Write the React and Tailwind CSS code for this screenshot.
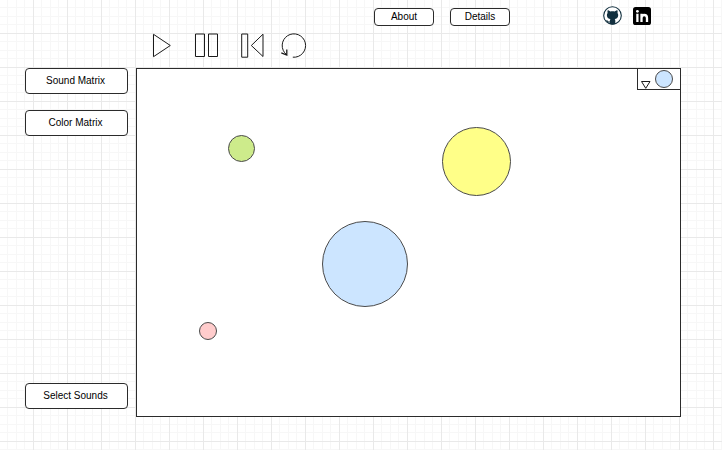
const shapes = [
  { name: "Green note", place: "left-[91px] top-[66px] size-[27px] bg-[#cdeb8b]" },
  { name: "Yellow note", place: "left-[305px] top-[58px] size-[69px] bg-[#ffff88]" },
  { name: "Blue note", place: "left-[185px] top-[152px] size-[86px] bg-[#cce5ff]" },
  { name: "Pink note", place: "left-[62px] top-[253px] size-[18px] bg-[#ffcccc]" },
];

function BoxButton({ size, children }) {
  return (
    <button
      type="button"
      className={`flex items-center justify-center rounded border border-[#2b2b2b] bg-white text-[10px] leading-3 text-black ${size}`}
    >
      {children}
    </button>
  );
}

function PlayerButton({ label, children }) {
  return (
    <button type="button" aria-label={label} className="h-[26px] w-7">
      <svg
        viewBox="0 0 28 26"
        fill="none"
        stroke="#1a1a1a"
        strokeWidth="1"
        className="block h-[26px] w-7 overflow-visible"
      >
        {children}
      </svg>
    </button>
  );
}

function GithubMark() {
  return (
    <svg viewBox="0 0 20 20" className="block size-5">
      <circle cx="9.5" cy="9.5" r="8.8" fill="#fff" stroke="#12303f" strokeWidth="1.1" />
      <path
        fill="#12303f"
        d="M4.700 4.300c.9 0 1.900.6 2.600 1.200 1.400-.4 3-.4 4.400 0 .8-.6 1.800-1.200 2.700-1.200.3.800.3 1.800.1 2.600.6.700.8 1.500.7 2.600-.2 2.200-1.500 3.200-3.500 3.500.4.500.6 1.100.6 1.800v3.100C10.600 18.700 8.700 18.700 6.800 17.900v-1.400c-1.700.3-2.400-.2-2.900-1.200-.3-.6-.5-.8-1-1.200.9-.2 1.500.2 2 .9.500.6 1.100.7 1.900.5 0-.9.200-1.600.6-2.500-2-.3-3.300-1.300-3.500-3.500-.1-1.100.1-1.900.7-2.600-.2-.8-.2-1.800.1-2.600z"
      />
    </svg>
  );
}

function LinkedinMark() {
  return (
    <svg viewBox="0 0 18 18" className="block size-[18px]">
      <rect width="18" height="18" rx="2.600" fill="#000" />
      <circle cx="4.400" cy="4.300" r="1.400" fill="#fff" />
      <path fill="none" stroke="#fff" strokeWidth="2.300" d="M4.400 6.800V15M8.500 15V6.800M8.500 11c0-4 5.500-4 5.500 0v4" />
    </svg>
  );
}

export default function App() {
  return (
    <div className="flex min-h-screen flex-col bg-white bg-[linear-gradient(to_right,#e9e9e9_1px,transparent_1px),linear-gradient(to_bottom,#e9e9e9_1px,transparent_1px),linear-gradient(to_right,transparent_8px,#f7f7f7_8px,#f7f7f7_9px,transparent_9px,transparent_17px,#f7f7f7_17px,#f7f7f7_18px,transparent_18px,transparent_25px,#f7f7f7_25px,#f7f7f7_26px,transparent_26px),linear-gradient(to_bottom,transparent_8px,#f7f7f7_8px,#f7f7f7_9px,transparent_9px,transparent_17px,#f7f7f7_17px,#f7f7f7_18px,transparent_18px,transparent_25px,#f7f7f7_25px,#f7f7f7_26px,transparent_26px)] bg-[size:34px_34px] bg-[position:33px_33px] pb-[33px] pt-1.5 font-['Liberation_Sans',Arial,sans-serif]">
      <header className="flex items-end justify-end pr-[71px]">
        <nav className="mr-[93px] flex gap-4">
          <BoxButton size="h-[18px] w-[60px]">About</BoxButton>
          <BoxButton size="h-[18px] w-[60px]">Details</BoxButton>
        </nav>
        <div className="flex items-center gap-[10px]">
          <a href="#github" aria-label="GitHub">
            <GithubMark />
          </a>
          <a href="#linkedin" aria-label="LinkedIn">
            <LinkedinMark />
          </a>
        </div>
      </header>

      <div className="mt-1.5 flex gap-4 pl-[148px]">
        <PlayerButton label="Play">
          <path d="M5.500 2.300V24.700L22.300 13.500z" />
        </PlayerButton>
        <PlayerButton label="Pause">
          <path d="M3.500 2h9v22.500h-9zM16.500 2h9v22.500h-9z" />
        </PlayerButton>
        <PlayerButton label="Back to start">
          <path d="M5.700 2h6v23.200h-6zM27 2.200V24.500L15.300 13.500z" />
        </PlayerButton>
        <PlayerButton label="Restart">
          <path d="M12.800 25.200a11.700 11.700 0 1 0-6.200-2.500" />
          <path strokeWidth="1.300" d="M1.300 20.900l5.500 2.200V17.400" />
        </PlayerButton>
      </div>

      <main className="mt-2.5 flex flex-1 gap-2 pl-[25px] pr-[41px]">
        <aside className="flex w-[103px] shrink-0 flex-col gap-4 pb-2">
          <BoxButton size="h-[26px] w-full pr-[2px]">Sound Matrix</BoxButton>
          <BoxButton size="h-[26px] w-full pr-[2px]">Color Matrix</BoxButton>
          <div className="mt-auto">
            <BoxButton size="h-[26px] w-full pr-[2px]">Select Sounds</BoxButton>
          </div>
        </aside>

        <section
          aria-label="Canvas"
          className="relative min-h-[300px] flex-1 border border-[#2b2b2b] bg-white"
        >
          {shapes.map((shape) => (
            <div
              key={shape.name}
              role="img"
              aria-label={shape.name}
              className={`absolute rounded-full border border-[#4a4a4a] ${shape.place}`}
            />
          ))}
          <button
            type="button"
            aria-label="Choose color"
            className="absolute -right-px -top-px flex h-[22px] w-11 items-center justify-between border border-[#2b2b2b] bg-white pl-[3px] pr-[7px]"
          >
            <svg viewBox="0 0 10 8" className="block h-2 w-2.5 self-end" fill="#fff" stroke="#1a1a1a">
              <path d="M.5.500h8.500L4.750 7.300z" />
            </svg>
            <span className="size-[18px] rounded-full border border-[#4a4a4a] bg-[#cce5ff]" />
          </button>
        </section>
      </main>
    </div>
  );
}
